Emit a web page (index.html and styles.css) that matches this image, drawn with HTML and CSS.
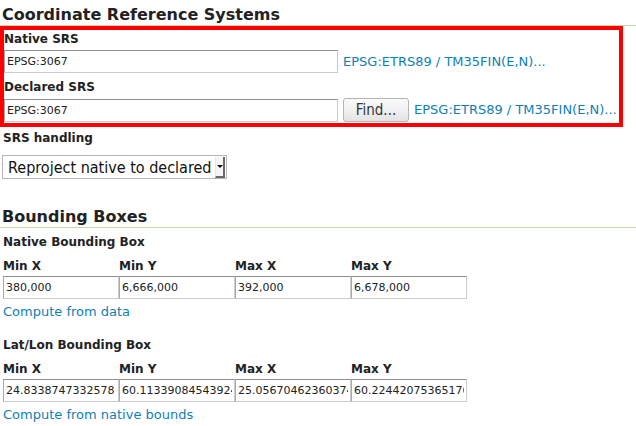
FILE: index.html
```html
<!DOCTYPE html>
<html>
<head>
<meta charset="utf-8">
<link rel="stylesheet" href="styles.css">
</head>
<body>
<div class="page">
  <h2 class="section-title">Coordinate Reference Systems</h2>
  <div class="highlight">
    <div class="field-label">Native SRS</div>
    <div class="field-row">
      <input class="text-input srs-input" type="text" value="EPSG:3067">
      <a class="link" href="#">EPSG:ETRS89 / TM35FIN(E,N)...</a>
    </div>
    <div class="field-label second">Declared SRS</div>
    <div class="field-row">
      <input class="text-input srs-input" type="text" value="EPSG:3067">
      <button class="find-btn" type="button">Find...</button>
      <a class="link" href="#">EPSG:ETRS89 / TM35FIN(E,N)...</a>
    </div>
  </div>
  <div class="field-label handling">SRS handling</div>
  <div class="select">
    <span class="select-text">Reproject native to declared</span>
    <span class="select-arrow"><span class="tri"></span></span>
  </div>

  <h2 class="section-title bbox-title">Bounding Boxes</h2>
  <div class="field-label bbox-label">Native Bounding Box</div>
  <div class="bbox-grid">
    <div class="bbox-head">Min X</div>
    <div class="bbox-head">Min Y</div>
    <div class="bbox-head">Max X</div>
    <div class="bbox-head">Max Y</div>
    <input class="text-input bbox-input" type="text" value="380,000">
    <input class="text-input bbox-input" type="text" value="6,666,000">
    <input class="text-input bbox-input" type="text" value="392,000">
    <input class="text-input bbox-input" type="text" value="6,678,000">
  </div>
  <a class="link block-link" href="#">Compute from data</a>

  <div class="field-label latlon-label">Lat/Lon Bounding Box</div>
  <div class="bbox-grid">
    <div class="bbox-head">Min X</div>
    <div class="bbox-head">Min Y</div>
    <div class="bbox-head">Max X</div>
    <div class="bbox-head">Max Y</div>
    <input class="text-input bbox-input" type="text" value="24.8338747332578">
    <input class="text-input bbox-input" type="text" value="60.11339084543924">
    <input class="text-input bbox-input" type="text" value="25.05670462360374">
    <input class="text-input bbox-input" type="text" value="60.22442075365176">
  </div>
  <a class="link block-link" href="#">Compute from native bounds</a>
</div>
</body>
</html>
```

FILE: styles.css
```css
html, body {
  margin: 0;
  background: #ffffff;
}

.page {
  padding-left: 3px;
  font-family: "DejaVu Sans", "Liberation Sans", sans-serif;
  color: #222222;
}

.section-title {
  margin: 0 0 0 -3px;
  padding: 5px 0 0 2px;
  font-size: 16px;
  line-height: 20px;
  font-weight: bold;
  color: #222222;
  border-bottom: 1px solid #c6daa8;
}

.bbox-title {
  margin-top: 23px;
}

.highlight {
  margin-left: -3px;
  width: 623px;
  box-sizing: border-box;
  border: 4px solid #ff0000;
  padding: 1px 0 1px 0;
}

.field-label {
  font-size: 12px;
  line-height: 16px;
  font-weight: bold;
  color: #222222;
}

.field-label.second {
  margin-top: 6px;
}

.field-label.handling {
  margin-top: 3px;
}

.field-label.bbox-label {
  margin-top: 6px;
}

.field-label.latlon-label {
  margin-top: 17px;
}

.field-row {
  display: flex;
  align-items: center;
  gap: 5px;
  margin-top: 3px;
}

.text-input {
  box-sizing: border-box;
  margin: 0;
  height: 23px;
  padding: 0 2px;
  font-family: "DejaVu Sans", sans-serif;
  font-size: 11px;
  color: #222222;
  background: #ffffff;
  border: 1px solid #cccccc;
  border-top-color: #8e8e8e;
  border-left-color: #a9a9a9;
  border-radius: 0;
  outline: none;
}

.srs-input {
  width: 334px;
}

.find-btn {
  box-sizing: border-box;
  width: 66px;
  height: 24px;
  margin: 0;
  padding: 0;
  font-family: "DejaVu Sans Condensed", "DejaVu Sans", sans-serif;
  font-stretch: condensed;
  font-size: 15px;
  color: #333333;
  border: 1px solid #b4b4b4;
  border-radius: 3px;
  background: linear-gradient(#fbfbfb, #e4e4e4);
}

.link {
  color: #0f80b4;
  text-decoration: none;
  font-size: 13px;
  line-height: 16px;
}

.block-link {
  display: block;
  margin-top: 5px;
}

.select {
  box-sizing: border-box;
  display: flex;
  align-items: center;
  width: 225px;
  height: 24px;
  margin: 9px 0 0 -1px;
  padding: 0 1px 0 5px;
  border: 1px solid #b5b5b5;
  background: #ffffff;
}

.select-text {
  font-family: "DejaVu Sans Condensed", "DejaVu Sans", sans-serif;
  font-stretch: condensed;
  font-size: 16px;
  color: #111111;
  white-space: nowrap;
}

.select-arrow {
  box-sizing: border-box;
  margin-left: auto;
  width: 10px;
  height: 21px;
  display: flex;
  align-items: center;
  justify-content: center;
  background: #f4f4f4;
  border-right: 2px solid #6a6a6a;
  border-bottom: 2px solid #6a6a6a;
  border-left: 1px solid #e6e6e6;
}

.tri {
  width: 0;
  height: 0;
  border-left: 3px solid transparent;
  border-right: 3px solid transparent;
  border-top: 3px solid #111111;
}

.bbox-grid {
  display: grid;
  grid-template-columns: repeat(4, 116px);
  row-gap: 2px;
  margin-top: 8px;
}

.bbox-head {
  font-size: 12px;
  line-height: 16px;
  font-weight: bold;
  color: #222222;
}

.bbox-input {
  width: 116px;
}
```
